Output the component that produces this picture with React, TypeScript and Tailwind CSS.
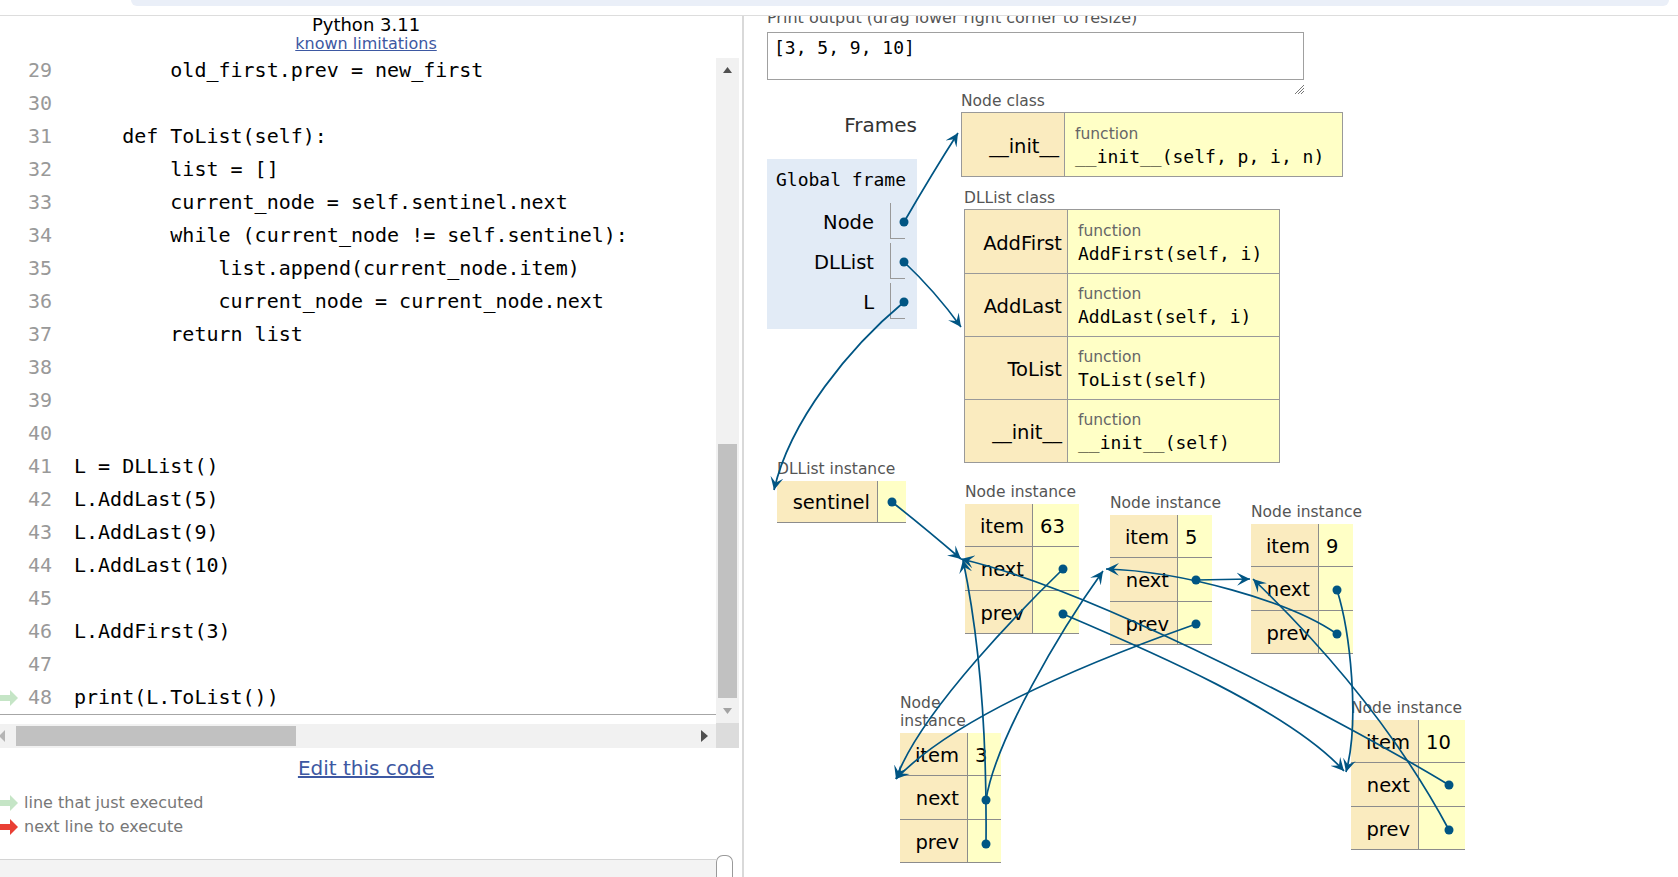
import React from "react";

const PTR = "#005583";

const codeLines: [number, string][] = [
  [29, "        old_first.prev = new_first"],
  [30, ""],
  [31, "    def ToList(self):"],
  [32, "        list = []"],
  [33, "        current_node = self.sentinel.next"],
  [34, "        while (current_node != self.sentinel):"],
  [35, "            list.append(current_node.item)"],
  [36, "            current_node = current_node.next"],
  [37, "        return list"],
  [38, ""],
  [39, ""],
  [40, ""],
  [41, "L = DLList()"],
  [42, "L.AddLast(5)"],
  [43, "L.AddLast(9)"],
  [44, "L.AddLast(10)"],
  [45, ""],
  [46, "L.AddFirst(3)"],
  [47, ""],
  [48, "print(L.ToList())"],
];

function LineArrow({ color }: { color: string }) {
  return (
    <svg width="18" height="16" viewBox="0 0 18 16">
      <path d="M0 5H10V0L18 8L10 16V11H0Z" fill={color} />
    </svg>
  );
}

function CodePanel() {
  return (
    <div className="w-[742px] flex flex-col font-['DejaVu_Sans',sans-serif]">
      <div className="w-[732px] text-center text-[18px] leading-[17px] text-black">Python 3.11</div>
      <div className="w-[732px] mt-[1px] text-center text-[16px] leading-[20px]">
        <a className="text-[#3d58a2] underline">known limitations</a>
      </div>

      <div className="flex">
        <div className="w-[716px] flex flex-col">
          <div className="h-[661px] border-b border-[#a6a6a6] font-['DejaVu_Sans_Mono',monospace] text-[20px]">
            {codeLines.map(([n, text]) => (
              <div key={n} className="flex h-[33px] items-center leading-[33px]">
                <div className="w-[18px] flex items-center">
                  {n === 48 && <LineArrow color="#c5e5c6" />}
                </div>
                <div className="w-[34px] text-right text-[#999]">{n}</div>
                <div className="pl-[22px] whitespace-pre text-black">{text}</div>
              </div>
            ))}
          </div>
          <div className="h-[9px]" />
          <div className="h-[24px] bg-[#f1f1f1] flex items-center">
            <svg width="6" height="12" viewBox="0 0 6 12">
              <polygon points="5,0 5,12 -1,6" fill="#b5b5b5" />
            </svg>
            <div className="w-[10px]" />
            <div className="w-[280px] h-[20px] bg-[#c1c1c1]" />
            <div className="flex-1" />
            <svg width="7" height="12" viewBox="0 0 7 12">
              <polygon points="0,0 7,6 0,12" fill="#505050" />
            </svg>
            <div className="w-[8px]" />
          </div>
        </div>
        <div className="w-[23px] flex flex-col">
          <div className="mt-[4px] h-[665px] bg-[#f1f1f1] flex flex-col items-center">
            <div className="h-[24px] flex items-center justify-center">
              <svg width="9" height="6" viewBox="0 0 9 6">
                <polygon points="0,6 4.5,0 9,6" fill="#505050" />
              </svg>
            </div>
            <div className="flex-1" />
            <div className="w-[19px] h-[254px] bg-[#c1c1c1]" />
            <div className="h-[25px] flex items-center justify-center">
              <svg width="9" height="6" viewBox="0 0 9 6">
                <polygon points="0,0 9,0 4.5,6" fill="#a3a3a3" />
              </svg>
            </div>
          </div>
          <div className="h-[25px] bg-[#dcdcdc]" />
        </div>
      </div>

      <div className="w-[732px] mt-[8px] text-center text-[20px] leading-[24px]">
        <a className="text-[#3d58a2] underline">Edit this code</a>
      </div>

      <div className="mt-[11px] flex flex-col text-[16px] leading-[24px] text-[#777]">
        <div className="flex items-center gap-[6px]">
          <LineArrow color="#c5e5c6" />
          <span>line that just executed</span>
        </div>
        <div className="flex items-center gap-[6px]">
          <LineArrow color="#e93f34" />
          <span>next line to execute</span>
        </div>
      </div>

      <div className="mt-[16px] flex">
        <div className="w-[716px] h-[22px] mt-[4px] border-t border-[#d4d4d4] bg-[#f3f3f3]" />
        <div className="w-[17px] h-[22px] rounded-t-[7px] border border-b-0 border-[#9a9a9a] bg-white" />
      </div>
    </div>
  );
}

function TypeLabel({ children, className = "" }: { children: React.ReactNode; className?: string }) {
  return <div className={"text-[15.5px] leading-[18px] text-[#555] " + className}>{children}</div>;
}

function ClassTable({
  label,
  width,
  rows,
}: {
  label: string;
  width: string;
  rows: { k: string; sig: string }[];
}) {
  return (
    <div>
      <TypeLabel className="mb-[2px]">{label}</TypeLabel>
      <div className={width + " border border-[#999] flex flex-col"}>
        {rows.map((r, i) => (
          <div key={r.k} className={"flex h-[63px] " + (i > 0 ? "border-t border-[#999]" : "")}>
            <div className="w-[103px] bg-[#faebbf] border-r border-[#999] flex items-center justify-end pr-[5px] pt-[4px] text-[19.5px]">
              {r.k}
            </div>
            <div className="flex-1 bg-[#ffffc6] flex flex-col justify-center pl-[10px] pt-[3px]">
              <div className="text-[15.5px] leading-[18px] text-[#666]">function</div>
              <div className="mt-[3px] font-['DejaVu_Sans_Mono',monospace] text-[18px] leading-[22px] whitespace-pre">
                {r.sig}
              </div>
            </div>
          </div>
        ))}
      </div>
    </div>
  );
}

const rowH = ["h-[43px]", "h-[44px]", "h-[43px]"];

function NodeInstance({ item, valW, label }: { item: string; valW: string; label?: React.ReactNode }) {
  const rows = [
    { k: "item", v: item },
    { k: "next", v: "" },
    { k: "prev", v: "" },
  ];
  return (
    <div>
      <TypeLabel className="mb-[3px]">{label ?? "Node instance"}</TypeLabel>
      <div className="flex flex-col">
        {rows.map((r, i) => (
          <div key={r.k} className={"flex " + rowH[i]}>
            <div className="w-[67px] bg-[#faebbf] border-b border-[#8c8c8c] flex items-center justify-end pr-[8px] pt-[3px] text-[19.5px]">
              {r.k}
            </div>
            <div className={valW + " bg-[#ffffc6] border-l border-b border-[#8c8c8c] flex items-center pl-[7px] pt-[3px] text-[19.5px]"}>
              {r.v}
            </div>
          </div>
        ))}
      </div>
    </div>
  );
}

function FrameRow({ name }: { name: string }) {
  return (
    <div className="flex h-[36px]">
      <div className="w-[114px] flex items-center justify-end pr-[16px] pt-[4px] text-[19.5px]">{name}</div>
      <div className="w-[15px] border-l border-b border-[#999]" />
    </div>
  );
}

function VizPanel() {
  return (
    <div className="relative flex-1 overflow-hidden pl-[23px] font-['DejaVu_Sans',sans-serif] text-black">
      <div className="-mt-[7px] text-[16px] leading-[18px] text-[#555] whitespace-nowrap">
        Print output (drag lower right corner to resize)
      </div>
      <div className="relative mt-[5px] w-[537px] h-[48px] border border-[#a0a0a0] pl-[6px] pt-[4px] font-['DejaVu_Sans_Mono',monospace] text-[18px] leading-[22px]">
        [3, 5, 9, 10]
        <svg className="absolute right-[-2px] bottom-[-16px]" width="11" height="11" viewBox="0 0 11 11">
          <path d="M1 10L10 1M4 10L10 4M7 10L10 7" stroke="#777" strokeWidth="1" />
        </svg>
      </div>

      <div className="relative">
        <div className="w-[150px] flex flex-col">
          <div className="mt-[33px] text-right text-[20px] leading-[24px] text-[#333]">Frames</div>
          <div className="mt-[22px] h-[170px] bg-[#e2ebf6] pl-[9px] pt-[10px]">
            <div className="font-['DejaVu_Sans_Mono',monospace] text-[18px] leading-[22px]">Global frame</div>
            <div className="mt-[12px] flex flex-col gap-[4px]">
              <FrameRow name="Node" />
              <FrameRow name="DLList" />
              <FrameRow name="L" />
            </div>
          </div>
        </div>

        <div className="absolute left-[194px] top-[12px]">
          <ClassTable label="Node class" width="w-[382px]" rows={[{ k: "__init__", sig: "__init__(self, p, i, n)" }]} />
        </div>
        <div className="absolute left-[197px] top-[109px]">
          <ClassTable
            label="DLList class"
            width="w-[316px]"
            rows={[
              { k: "AddFirst", sig: "AddFirst(self, i)" },
              { k: "AddLast", sig: "AddLast(self, i)" },
              { k: "ToList", sig: "ToList(self)" },
              { k: "__init__", sig: "__init__(self)" },
            ]}
          />
        </div>

        <div className="absolute left-[10px] top-[380px]">
          <TypeLabel className="mb-[3px]">DLList instance</TypeLabel>
          <div className="flex h-[42px]">
            <div className="w-[100px] bg-[#faebbf] border-b border-[#8c8c8c] flex items-center justify-end pr-[7px] pt-[3px] text-[19.5px]">
              sentinel
            </div>
            <div className="w-[29px] bg-[#ffffc6] border-l border-b border-[#8c8c8c]" />
          </div>
        </div>

        <div className="absolute left-[198px] top-[403px]">
          <NodeInstance item="63" valW="w-[47px]" />
        </div>
        <div className="absolute left-[343px] top-[414px]">
          <NodeInstance item="5" valW="w-[35px]" />
        </div>
        <div className="absolute left-[484px] top-[423px]">
          <NodeInstance item="9" valW="w-[35px]" />
        </div>
        <div className="absolute left-[133px] top-[614px] w-[101px]">
          <NodeInstance item="3" valW="w-[34px]" label={<>Node<br />instance</>} />
        </div>
        <div className="absolute left-[584px] top-[619px]">
          <NodeInstance item="10" valW="w-[47px]" />
        </div>
      </div>
    </div>
  );
}

const arrows = [
  "M904,222 Q933,172 958,133",
  "M904,262 Q935,291 961,327",
  "M904,302 C850,347 790,420 774,490",
  "M892,502 Q925,528 961,559",
  "M1063,569 C1030,601 920,711 896,779",
  "M1063,614 C1150,651 1290,711 1344,771",
  "M1196,580 L1250,579",
  "M1196,624 C1120,651 960,711 896,779",
  "M1337,590 C1350,631 1360,721 1346,772",
  "M1337,634 C1290,601 1180,571 1106,569",
  "M1449,785 C1360,731 1100,591 961,559",
  "M1449,830 Q1380,701 1253,579",
  "M986,800 C995,741 1060,631 1103,571",
  "M986,844 C987,741 980,641 963,560",
];

const dots: [number, number][] = [
  [904, 222],
  [904, 262],
  [904, 302],
  [892, 502],
  [1063, 569],
  [1063, 614],
  [1196, 580],
  [1196, 624],
  [1337, 590],
  [1337, 634],
  [986, 800],
  [986, 844],
  [1449, 785],
  [1449, 830],
];

function Pointers() {
  return (
    <svg className="absolute left-0 top-0 pointer-events-none" width="1678" height="877" viewBox="0 0 1678 877">
      <defs>
        <marker id="head" markerWidth="14" markerHeight="14" refX="13" refY="7" orient="auto" markerUnits="userSpaceOnUse">
          <path d="M13,7 L0,0.5 L5.5,7 L0,13.5 Z" fill={PTR} />
        </marker>
      </defs>
      {arrows.map((d, i) => (
        <path key={i} d={d} fill="none" stroke={PTR} strokeWidth="1.7" markerEnd="url(#head)" />
      ))}
      {dots.map(([x, y], i) => (
        <circle key={i} cx={x} cy={y} r="4.5" fill={PTR} />
      ))}
    </svg>
  );
}

export default function App() {
  return (
    <div className="relative w-[1678px] h-[877px] overflow-hidden bg-white">
      <div className="relative z-10 h-[16px] border-b border-[#dddddd] bg-white pl-[131px] pr-[9px]">
        <div className="h-[6px] rounded-b-[14px] bg-[#eaeff8]" />
      </div>
      <div className="flex h-[861px]">
        <CodePanel />
        <div className="w-[2px] bg-[#d9d9d9]" />
        <VizPanel />
      </div>
      <Pointers />
    </div>
  );
}
